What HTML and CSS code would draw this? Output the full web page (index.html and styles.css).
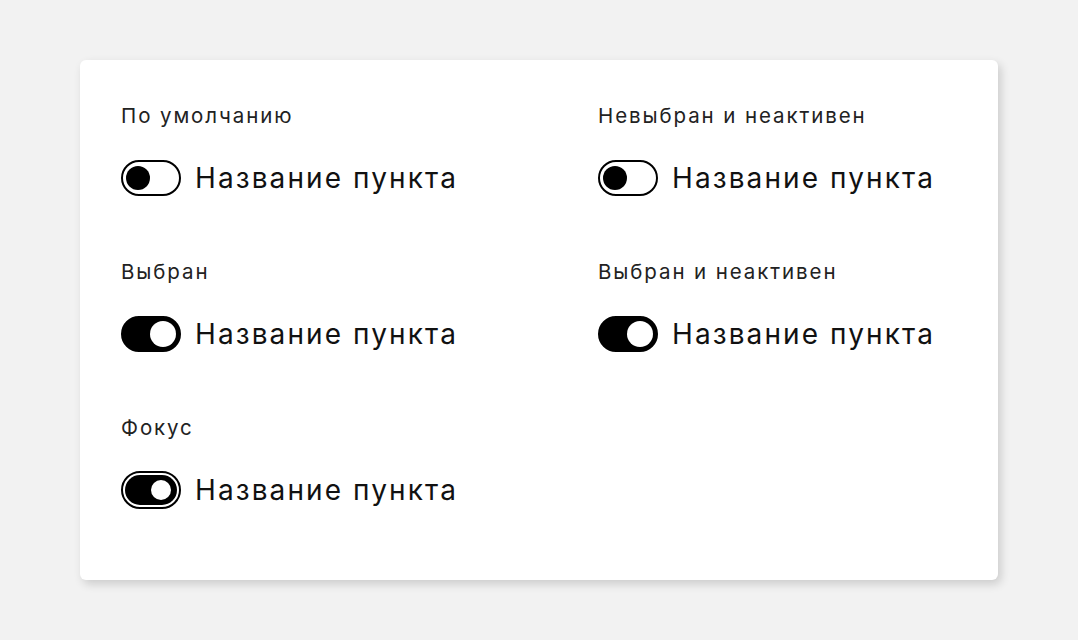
FILE: index.html
```html
<!DOCTYPE html>
<html lang="ru">
<head>
<meta charset="utf-8">
<title>Переключатели</title>
<link rel="stylesheet" href="styles.css">
</head>
<body>
<div class="card">
  <div class="grid">
    <div class="item">
      <div class="label">По умолчанию</div>
      <div class="row">
        <span class="toggle"><span class="knob"></span></span>
        <span class="text">Название пункта</span>
      </div>
    </div>
    <div class="item">
      <div class="label">Невыбран и неактивен</div>
      <div class="row">
        <span class="toggle"><span class="knob"></span></span>
        <span class="text">Название пункта</span>
      </div>
    </div>
    <div class="item">
      <div class="label">Выбран</div>
      <div class="row">
        <span class="toggle on"><span class="knob"></span></span>
        <span class="text">Название пункта</span>
      </div>
    </div>
    <div class="item">
      <div class="label">Выбран и неактивен</div>
      <div class="row">
        <span class="toggle on"><span class="knob"></span></span>
        <span class="text">Название пункта</span>
      </div>
    </div>
    <div class="item">
      <div class="label">Фокус</div>
      <div class="row">
        <span class="toggle focus"><span class="inner"><span class="knob"></span></span></span>
        <span class="text">Название пункта</span>
      </div>
    </div>
  </div>
</div>
</body>
</html>
```

FILE: styles.css
```css
* { box-sizing: border-box; }
html, body { margin: 0; padding: 0; }
body {
  background: #f2f2f2;
  font-family: Inter, "Noto Sans", sans-serif;
  color: #1a1a1a;
}
.card {
  margin: 60px 80px;
  width: 918px;
  background: #fff;
  border-radius: 6px;
  box-shadow: 3px 4px 10px rgba(0, 0, 0, 0.16);
  padding: 44px 0 72px 41px;
}
.grid {
  display: grid;
  grid-template-columns: 477px 1fr;
  row-gap: 64px;
}
.item {
  display: flex;
  flex-direction: column;
  gap: 32px;
}
.label {
  font-size: 20.5px;
  line-height: 24px;
  letter-spacing: 1.9px;
  color: #222;
}
.row {
  display: flex;
  align-items: center;
  gap: 14px;
  height: 36px;
}
.text {
  font-size: 28px;
  line-height: 36px;
  letter-spacing: 2.1px;
  color: #111;
}
.toggle {
  display: flex;
  align-items: center;
  width: 60px;
  height: 36px;
  border: 2px solid #000;
  border-radius: 18px;
  padding: 0 3px;
  flex: none;
}
.toggle .knob {
  width: 24px;
  height: 24px;
  border-radius: 50%;
  background: #000;
}
.toggle.on {
  background: #000;
  justify-content: flex-end;
  padding: 0 3px;
}
.toggle.on .knob {
  width: 26px;
  height: 26px;
  background: #fff;
}
.toggle.focus {
  height: 38px;
  border-radius: 19px;
  padding: 2px;
  margin-top: -1px;
  margin-bottom: -1px;
}
.toggle.focus .inner {
  display: flex;
  align-items: center;
  justify-content: flex-end;
  width: 100%;
  height: 100%;
  background: #000;
  border-radius: 15px;
  padding: 0 6px;
}
.toggle.focus .knob {
  width: 20px;
  height: 20px;
  background: #fff;
}
```
